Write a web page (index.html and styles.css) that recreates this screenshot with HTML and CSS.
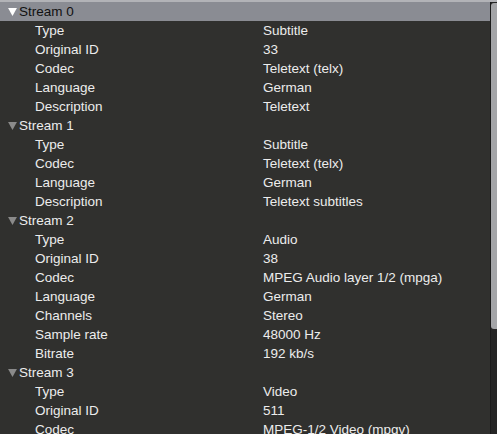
FILE: index.html
```html
<!DOCTYPE html>
<html lang="en">
<head>
    <meta charset="UTF-8">
    <title>Codec Information</title>
    <link rel="stylesheet" href="styles.css">
</head>
<body>
    <div class="view">
        <div class="tree">
            <div class="row head selected">
                <svg class="arrow" viewBox="0 0 10 9"><polygon points="0,0 10,0 5,9"/></svg>
                <span>Stream 0</span>
            </div>
            <div class="row"><span class="key">Type</span><span class="val">Subtitle</span></div>
            <div class="row"><span class="key">Original ID</span><span class="val">33</span></div>
            <div class="row"><span class="key">Codec</span><span class="val">Teletext (telx)</span></div>
            <div class="row"><span class="key">Language</span><span class="val">German</span></div>
            <div class="row"><span class="key">Description</span><span class="val">Teletext</span></div>

            <div class="row head">
                <svg class="arrow" viewBox="0 0 10 9"><polygon points="0,0 10,0 5,9"/></svg>
                <span>Stream 1</span>
            </div>
            <div class="row"><span class="key">Type</span><span class="val">Subtitle</span></div>
            <div class="row"><span class="key">Codec</span><span class="val">Teletext (telx)</span></div>
            <div class="row"><span class="key">Language</span><span class="val">German</span></div>
            <div class="row"><span class="key">Description</span><span class="val">Teletext subtitles</span></div>

            <div class="row head">
                <svg class="arrow" viewBox="0 0 10 9"><polygon points="0,0 10,0 5,9"/></svg>
                <span>Stream 2</span>
            </div>
            <div class="row"><span class="key">Type</span><span class="val">Audio</span></div>
            <div class="row"><span class="key">Original ID</span><span class="val">38</span></div>
            <div class="row"><span class="key">Codec</span><span class="val">MPEG Audio layer 1/2 (mpga)</span></div>
            <div class="row"><span class="key">Language</span><span class="val">German</span></div>
            <div class="row"><span class="key">Channels</span><span class="val">Stereo</span></div>
            <div class="row"><span class="key">Sample rate</span><span class="val">48000 Hz</span></div>
            <div class="row"><span class="key">Bitrate</span><span class="val">192 kb/s</span></div>

            <div class="row head">
                <svg class="arrow" viewBox="0 0 10 9"><polygon points="0,0 10,0 5,9"/></svg>
                <span>Stream 3</span>
            </div>
            <div class="row"><span class="key">Type</span><span class="val">Video</span></div>
            <div class="row"><span class="key">Original ID</span><span class="val">511</span></div>
            <div class="row"><span class="key">Codec</span><span class="val">MPEG-1/2 Video (mpgv)</span></div>
        </div>
        <div class="scrollbar">
            <div class="thumb"></div>
        </div>
    </div>
</body>
</html>
```

FILE: styles.css
```css
body {
    margin: 0;
    background-color: #30302e;
    font-family: "Liberation Sans", Arial, sans-serif;
    font-size: 13.5px;
    color: #ececec;
    overflow: hidden;
}

.view {
    display: flex;
    height: 434px;
    border-top: 2px solid #b2b3b7;
    box-sizing: border-box;
}

.tree {
    flex: 1;
    overflow: hidden;
}

.row {
    display: flex;
    align-items: center;
    height: 19px;
    white-space: nowrap;
}

.key {
    width: 228px;
    padding-left: 35px;
}

.head {
    padding-left: 8px;
}

.head.selected {
    background-color: #8a8c93;
    color: #111;
}

.arrow {
    width: 9px;
    height: 8px;
    margin-right: 2px;
    fill: #8a8a8a;
}

.selected .arrow {
    fill: #ffffff;
}

.scrollbar {
    width: 6px;
    background-color: #252525;
    border-left: 1px solid #1b1b1b;
}

.thumb {
    height: 326px;
    margin-top: 1px;
    background-color: #a4a5a8;
    border-radius: 3px 0 0 3px;
}
```
